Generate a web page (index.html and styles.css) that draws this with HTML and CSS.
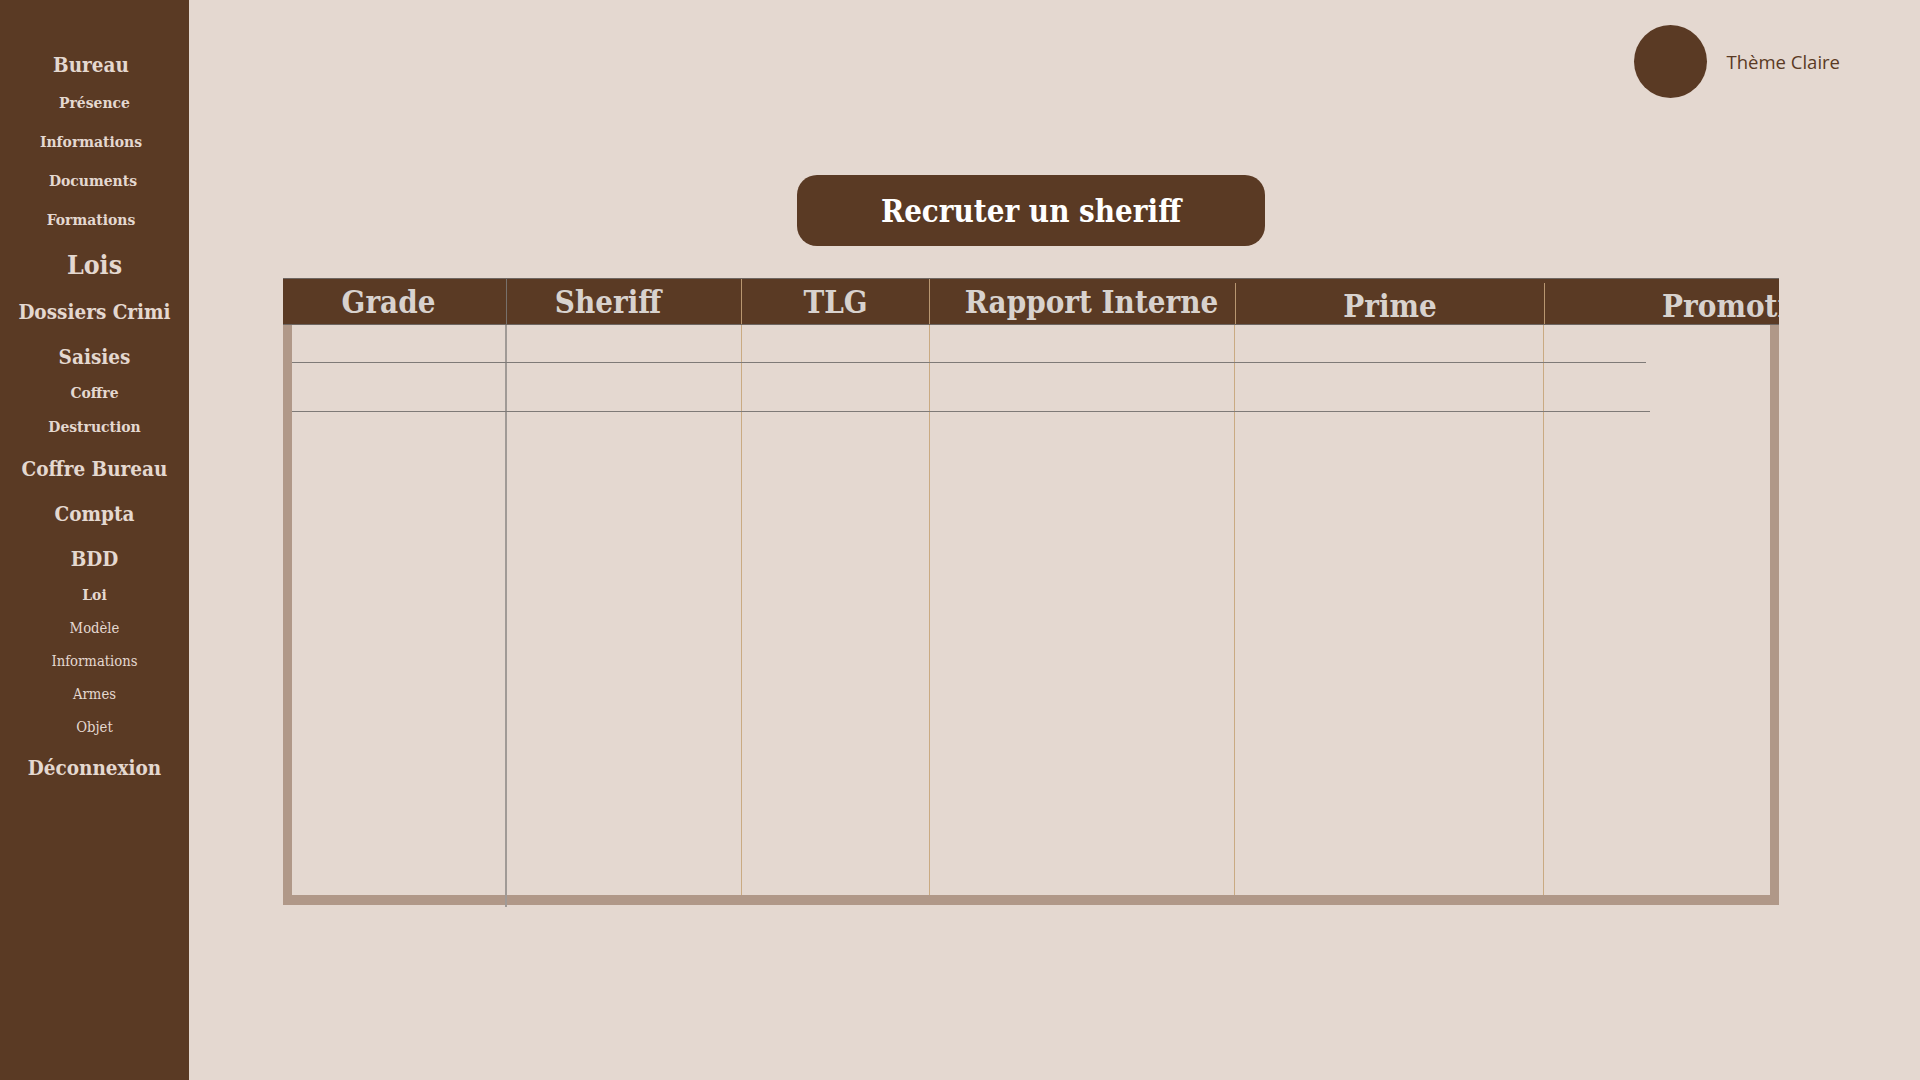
FILE: index.html
```html
<!DOCTYPE html>
<html lang="fr">
<head>
  <meta charset="UTF-8">
  <title>Bureau du Sheriff</title>
  <link rel="stylesheet" href="styles.css">
</head>
<body>
  <nav class="sidebar">
    <a class="nav-main nudge" href="#">Bureau</a>
    <div class="nav-sub nav-sub-wide">
      <a href="#">Présence</a>
      <a class="nudge" href="#">Informations</a>
      <a class="nudge-sm" href="#">Documents</a>
      <a class="nudge" href="#">Formations</a>
    </div>
    <a class="nav-main nav-big" href="#">Lois</a>
    <a class="nav-main" href="#">Dossiers Crimi</a>
    <a class="nav-main" href="#">Saisies</a>
    <div class="nav-sub nav-sub-mid">
      <a href="#">Coffre</a>
      <a href="#">Destruction</a>
    </div>
    <a class="nav-main" href="#">Coffre Bureau</a>
    <a class="nav-main" href="#">Compta</a>
    <a class="nav-main" href="#">BDD</a>
    <div class="nav-sub nav-sub-tight">
      <a href="#">Loi</a>
      <a class="light" href="#">Modèle</a>
      <a class="light" href="#">Informations</a>
      <a class="light" href="#">Armes</a>
      <a class="light" href="#">Objet</a>
    </div>
    <a class="nav-main" href="#">Déconnexion</a>
  </nav>

  <main class="content">
    <div class="topbar">
      <button class="theme-dot" type="button"></button>
      <span class="theme-label">Thème Claire</span>
    </div>

    <div class="panel">
      <button class="recruit-btn" type="button">Recruter un sheriff</button>

      <div class="roster">
        <div class="roster-head">
          <div class="th th-grade">Grade</div>
          <div class="th th-sheriff">Sheriff</div>
          <div class="th th-tlg">TLG</div>
          <div class="th th-rapport">Rapport Interne</div>
          <div class="th th-late">Prime</div>
          <div class="th th-late">Promotion</div>
        </div>
        <div class="roster-body">
          <div class="col-line col-first" style="grid-column: 1;"></div>
          <div class="col-line" style="grid-column: 2;"></div>
          <div class="col-line" style="grid-column: 3;"></div>
          <div class="col-line" style="grid-column: 4;"></div>
          <div class="col-line" style="grid-column: 5;"></div>
          <div class="row-line row-one"></div>
          <div class="row-line row-two"></div>
        </div>
      </div>
    </div>
  </main>
</body>
</html>
```

FILE: styles.css
```css
body {
  margin: 0;
  display: flex;
  min-height: 1080px;
  background: #e4d8d0;
  font-family: "DejaVu Serif Condensed", "DejaVu Serif", serif;
}

/* sidebar */
.sidebar {
  width: 189px;
  flex-shrink: 0;
  background: #5a3a24;
  padding-top: 43px;
  display: flex;
  flex-direction: column;
  text-align: center;
}
.sidebar a {
  color: #e4d8d0;
  text-decoration: none;
  font-weight: bold;
}
.sidebar a.nudge { padding-right: 7px; }
.sidebar a.nudge-sm { padding-right: 3px; }
.nav-main { font-size: 20.5px; line-height: 45px; }
.nav-big { font-size: 26.5px; line-height: 51px; }
.nav-sub { display: flex; flex-direction: column; }
.nav-sub a { font-size: 15.5px; }
.nav-sub a.light { font-weight: normal; font-size: 14.7px; }
.nav-sub-wide { margin-top: -5px; line-height: 39px; }
.nav-sub-mid { margin: -4px 0 3px; line-height: 34px; }
.nav-sub-tight { margin: -4px 0 3px; line-height: 33px; }

/* main */
.content { flex: 1; }
.topbar {
  display: flex;
  justify-content: flex-end;
  align-items: center;
  gap: 20px;
  padding: 25px 80px 0 0;
}
.theme-dot {
  width: 73px;
  height: 73px;
  border-radius: 50%;
  border: none;
  background: #5a3a24;
  cursor: pointer;
}
.theme-label {
  font-family: "Open Sans", sans-serif;
  font-size: 18.5px;
  color: #5a3a24;
}

.panel {
  width: 1496px;
  padding-left: 94px;
  display: flex;
  flex-direction: column;
}
.recruit-btn {
  align-self: center;
  width: 468px;
  height: 71px;
  margin-top: 77px;
  border: none;
  border-radius: 20px;
  background: #5a3a24;
  color: #fff;
  font-family: "DejaVu Serif Condensed", "DejaVu Serif", serif;
  font-size: 31px;
  font-weight: bold;
  cursor: pointer;
}

/* table */
.roster { margin-top: 32px; }
.roster-head {
  display: grid;
  grid-template-columns: 224px 235px 188px 305px 309px 400px;
  height: 45px;
  overflow: hidden;
  background: #5a3a24;
  border-top: 1px solid #6e6661;
  border-bottom: 1px solid #6e6661;
  color: #d8d2ce;
  font-size: 31px;
  font-weight: bold;
  line-height: 45px;
  text-align: center;
  white-space: nowrap;
}
.th { padding-top: 1px; }
.th-grade { border-right: 1px solid #77706b; padding-right: 12px; }
.th-sheriff { border-right: 1px solid #b89670; padding-right: 32px; }
.th-tlg { border-right: 1px solid #b89670; }
.th-rapport { padding-left: 18px; }
.th-late { margin-top: 4px; border-left: 1px solid #b89670; }

.roster-body {
  display: grid;
  grid-template-columns: 215px 235px 188px 305px 309px 1fr;
  grid-template-rows: 38px 49px 1fr;
  height: 570px;
  border: solid #b09888;
  border-width: 0 9px 10px 9px;
}
.col-line {
  grid-row: 1 / -1;
  border-right: 1px solid #c9aa82;
}
.col-first {
  border-right: 2px solid #a09a96;
  margin-bottom: -12px;
}
.row-line {
  grid-column: 1 / -1;
  align-self: end;
  justify-self: start;
  border-bottom: 1px solid #7e7a77;
}
.row-one { grid-row: 1; width: 1354px; }
.row-two { grid-row: 2; width: 1358px; }
```
